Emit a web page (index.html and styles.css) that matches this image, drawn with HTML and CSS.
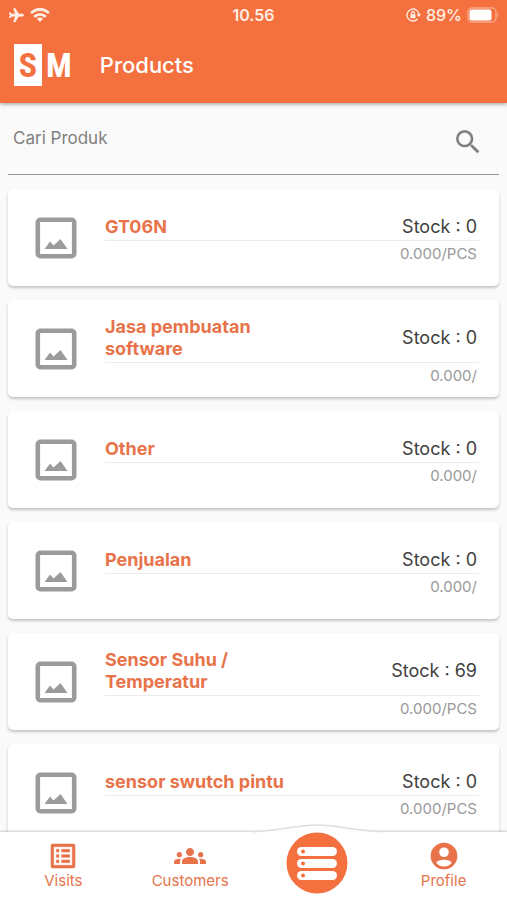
FILE: index.html
```html
<!DOCTYPE html>
<html lang="id">
<head>
    <meta charset="UTF-8">
    <meta name="viewport" content="width=device-width, initial-scale=1.0">
    <title>Products</title>
    <link rel="stylesheet" href="styles.css">
</head>
<body>
    <!-- Shared icons -->
    <svg class="sprite" aria-hidden="true">
        <symbol id="icon-image" viewBox="0 0 42 42">
            <rect x="2.8" y="2.8" width="36.400" height="36.400" rx="2.500" fill="none" stroke="currentColor" stroke-width="4.6"/>
            <path d="M9.500 32 L15 24.500 L18.500 28.500 L25.500 22 L32.500 32 Z" fill="currentColor"/>
        </symbol>
    </svg>

    <header class="app-header">
        <div class="status-bar">
            <div class="status-left">
                <svg width="17" height="17" viewBox="0 0 24 24" fill="currentColor" aria-hidden="true">
                    <path transform="rotate(90 12 12)" d="M21 16v-2l-8-5V3.500a1.500 1.500 0 0 0-3 0V9l-8 5v2l8-2.500V19l-2 1.500V22l3.500-1 3.500 1v-1.500L13 19v-5.500z" stroke="currentColor"/>
                </svg>
                <svg width="20" height="14" viewBox="0 0 20 14" fill="none" stroke="currentColor" stroke-width="2.8" aria-hidden="true">
                    <path d="M1 5 Q10 -2.500 19 5"/>
                    <path d="M4.200 8.800 Q10 4 15.800 8.800"/>
                    <path d="M10 14 L6.800 10.800 Q10 8.400 13.200 10.800 Z" fill="currentColor" stroke="none"/>
                </svg>
            </div>
            <span class="status-time">10.56</span>
            <div class="status-right">
                <svg width="15" height="14" viewBox="0 0 15 14" fill="none" stroke="currentColor" stroke-width="1.300" aria-hidden="true">
                    <path d="M11.500 11 A6 6 0 1 1 13 7"/>
                    <path d="M10.800 6.200 H15 L12.900 9 Z" fill="currentColor" stroke="none"/>
                    <rect x="4.500" y="6.200" width="5" height="4" rx="0.500" fill="currentColor" stroke="none"/>
                    <path d="M5.500 6.500 V5.200 a1.500 1.500 0 0 1 3 0 V6.500"/>
                </svg>
                <span class="status-battery">89%</span>
                <svg width="32" height="16" viewBox="0 0 32 16" aria-hidden="true">
                    <rect x="1" y="1" width="28" height="14" rx="4" fill="none" stroke="#fff" stroke-opacity="0.4" stroke-width="1.300"/>
                    <rect x="2.500" y="2.500" width="22" height="11" rx="2.500" fill="#fff"/>
                    <path d="M30.500 5.500 q2 2.500 0 5 z" fill="#fff" fill-opacity="0.4"/>
                </svg>
            </div>
        </div>
        <div class="title-bar">
            <div class="logo"><span class="logo-box">S</span><span class="logo-letter">M</span></div>
            <h1 class="page-title">Products</h1>
        </div>
    </header>

    <main class="content">
        <form class="search">
            <input class="search-input" type="text" placeholder="Cari Produk" aria-label="Cari Produk">
            <button class="search-button" type="button" aria-label="Cari">
                <svg width="32" height="32" viewBox="0 0 24 24" fill="currentColor" aria-hidden="true">
                    <path d="M15.500 14h-.79l-.28-.27A6.471 6.471 0 0 0 16 9.500 6.500 6.500 0 1 0 9.500 16c1.610 0 3.090-.59 4.230-1.570l.27.28v.79l5 4.990L20.490 19l-4.990-5zm-6 0C7.010 14 5 11.990 5 9.500S7.010 5 9.500 5 14 7.010 14 9.500 11.990 14 9.500 14z"/>
                </svg>
            </button>
        </form>

        <div class="product-list">
            <article class="product">
                <svg class="product-image" aria-hidden="true"><use href="#icon-image"/></svg>
                <div class="product-info">
                    <div class="product-row">
                        <h2 class="product-name">GT06N</h2>
                        <span class="product-stock">Stock : 0</span>
                    </div>
                    <p class="product-price">0.000/PCS</p>
                </div>
            </article>
            <article class="product">
                <svg class="product-image" aria-hidden="true"><use href="#icon-image"/></svg>
                <div class="product-info">
                    <div class="product-row">
                        <h2 class="product-name">Jasa pembuatan software</h2>
                        <span class="product-stock">Stock : 0</span>
                    </div>
                    <p class="product-price">0.000/</p>
                </div>
            </article>
            <article class="product">
                <svg class="product-image" aria-hidden="true"><use href="#icon-image"/></svg>
                <div class="product-info">
                    <div class="product-row">
                        <h2 class="product-name">Other</h2>
                        <span class="product-stock">Stock : 0</span>
                    </div>
                    <p class="product-price">0.000/</p>
                </div>
            </article>
            <article class="product">
                <svg class="product-image" aria-hidden="true"><use href="#icon-image"/></svg>
                <div class="product-info">
                    <div class="product-row">
                        <h2 class="product-name">Penjualan</h2>
                        <span class="product-stock">Stock : 0</span>
                    </div>
                    <p class="product-price">0.000/</p>
                </div>
            </article>
            <article class="product">
                <svg class="product-image" aria-hidden="true"><use href="#icon-image"/></svg>
                <div class="product-info">
                    <div class="product-row">
                        <h2 class="product-name">Sensor Suhu / Temperatur</h2>
                        <span class="product-stock">Stock : 69</span>
                    </div>
                    <p class="product-price">0.000/PCS</p>
                </div>
            </article>
            <article class="product">
                <svg class="product-image" aria-hidden="true"><use href="#icon-image"/></svg>
                <div class="product-info">
                    <div class="product-row">
                        <h2 class="product-name">sensor swutch pintu</h2>
                        <span class="product-stock">Stock : 0</span>
                    </div>
                    <p class="product-price">0.000/PCS</p>
                </div>
            </article>
        </div>
    </main>

    <nav class="bottom-nav">
        <a class="nav-item" href="#visits">
            <svg width="32" height="32" viewBox="0 0 24 24" fill="currentColor" aria-hidden="true">
                <path d="M19 5v14H5V5h14m1.100-2H3.900c-.5 0-.9.4-.9.900v16.200c0 .4.4.9.9.900h16.200c.4 0 .9-.5.9-.9V3.900c0-.5-.5-.9-.9-.9zM11 7h6v2h-6V7zm0 4h6v2h-6v-2zm0 4h6v2h-6zM7 7h2v2H7zm0 4h2v2H7zm0 4h2v2H7z" stroke="currentColor" stroke-width="0.4"/>
            </svg>
            <span>Visits</span>
        </a>
        <a class="nav-item" href="#customers">
            <svg width="32" height="32" viewBox="0 0 24 24" fill="currentColor" aria-hidden="true">
                <path d="M12 12.750c1.630 0 3.070.39 4.240.9 1.080.48 1.760 1.560 1.760 2.730V18H6v-1.610c0-1.180.68-2.260 1.760-2.730 1.170-.52 2.610-.91 4.240-.91zM4 13c1.100 0 2-.9 2-2s-.9-2-2-2-2 .9-2 2 .9 2 2 2zm1.130 1.100c-.37-.06-.74-.1-1.130-.1-.99 0-1.930.21-2.780.58A2.010 2.010 0 0 0 0 16.430V18h4.500v-1.610c0-.83.23-1.610.63-2.290zM20 13c1.100 0 2-.9 2-2s-.9-2-2-2-2 .9-2 2 .9 2 2 2zm4 3.430c0-.81-.48-1.530-1.220-1.850A6.950 6.950 0 0 0 20 14c-.39 0-.76.04-1.130.1.4.68.63 1.460.63 2.290V18H24v-1.570zM12 6c1.660 0 3 1.340 3 3s-1.340 3-3 3-3-1.340-3-3 1.340-3 3-3z"/>
            </svg>
            <span>Customers</span>
        </a>
        <a class="nav-item nav-active" href="#products" aria-label="Products">
            <svg class="nav-bump" width="140" height="10" viewBox="0 0 140 10" aria-hidden="true">
                <path d="M0 8 C30 7 50 1 70 1 C90 1 110 7 140 8 V10 H0 Z" fill="#fff"/>
                <path d="M6 7.700 C32 6.600 51 1 70 1 C89 1 108 6.600 134 7.700" fill="none" stroke="#dedede" stroke-width="1.500"/>
            </svg>
            <svg class="nav-circle" width="62" height="62" viewBox="0 0 62 62" aria-hidden="true">
                <circle cx="31" cy="31" r="30.500" fill="currentColor"/>
                <g fill="#fff">
                    <rect x="11" y="15" width="40" height="9" rx="4.500"/>
                    <rect x="11" y="27" width="40" height="9" rx="4.500"/>
                    <rect x="11" y="39" width="40" height="9" rx="4.500"/>
                </g>
                <g fill="currentColor">
                    <circle cx="17" cy="19.500" r="2"/>
                    <circle cx="17" cy="31.500" r="2"/>
                    <circle cx="17" cy="43.500" r="2"/>
                </g>
            </svg>
        </a>
        <a class="nav-item" href="#profile">
            <svg width="32" height="32" viewBox="0 0 24 24" fill="currentColor" aria-hidden="true">
                <path fill-rule="evenodd" d="M12 2a10 10 0 1 0 0 20 10 10 0 0 0 0-20zm0 3.600a3.600 3.600 0 1 1 0 7.200 3.600 3.600 0 0 1 0-7.200zm0 14.200c-2.500 0-4.500-1-5.800-2.800.5-1.400 3.500-2.200 5.800-2.200s5.300.8 5.800 2.200c-1.300 1.800-3.300 2.800-5.800 2.800z"/>
            </svg>
            <span>Profile</span>
        </a>
    </nav>
</body>
</html>
```
FILE: styles.css
```css
* {
    box-sizing: border-box;
}

body {
    margin: 0;
    height: 100vh;
    display: flex;
    flex-direction: column;
    overflow: hidden;
    font-family: Inter, "Liberation Sans", sans-serif;
    background-color: #fafafa;
    color: #404040;
}

.sprite {
    display: none;
}

/* Header */
.app-header {
    flex-shrink: 0;
    padding-bottom: 17px;
    background-color: #f4713f;
    color: #fff;
    box-shadow: 0 1px 4px rgba(0, 0, 0, 0.4);
}

.status-bar {
    display: grid;
    grid-template-columns: 1fr auto 1fr;
    align-items: center;
    height: 30px;
    padding: 0 8px;
    color: #ffeee6;
    font-size: 16px;
}

.status-left,
.status-right {
    display: flex;
    align-items: center;
    gap: 5px;
}

.status-right {
    justify-content: flex-end;
}

.status-time {
    font-weight: 600;
}

.status-battery {
    font-weight: 500;
}

.title-bar {
    display: flex;
    align-items: center;
    gap: 28px;
    padding: 14px 14px 0;
}

.logo {
    display: flex;
    align-items: center;
    gap: 4px;
    font-family: "Liberation Sans Narrow", "Roboto Condensed", "DejaVu Sans Condensed", sans-serif;
    font-size: 34px;
    font-weight: bold;
}

.logo-box {
    width: 28px;
    background-color: #fff;
    color: #f4713f;
    line-height: 42px;
    text-align: center;
}

.page-title {
    margin: 0;
    font-size: 22px;
    font-weight: 500;
}

/* Search */
.content {
    flex: 1;
    min-height: 0;
    overflow: hidden;
    padding: 0 8px;
}

.search {
    display: flex;
    align-items: center;
    height: 72px;
    border-bottom: 1px solid #999;
}

.search-input {
    flex: 1;
    min-width: 0;
    padding: 0 5px 2px;
    border: none;
    outline: none;
    background: none;
    color: #404040;
    font-family: inherit;
    font-size: 17px;
}

.search-input::placeholder {
    color: #808080;
    opacity: 1;
}

.search-button {
    display: flex;
    padding: 7px 15px 0;
    border: none;
    background: none;
    color: #808080;
    cursor: pointer;
}

/* Products */
.product-list {
    display: flex;
    flex-direction: column;
    gap: 14px;
    padding-top: 14px;
}

.product {
    display: flex;
    align-items: center;
    gap: 28px;
    min-height: 97px;
    padding: 0 20px 0 27px;
    border-radius: 5px;
    background-color: #fff;
    box-shadow: 0 2px 3px rgba(0, 0, 0, 0.22);
}

.product-image {
    flex-shrink: 0;
    width: 42px;
    height: 42px;
    color: #9b9b9b;
}

.product-info {
    flex: 1;
    min-width: 0;
    padding-top: 4px;
}

.product-row {
    display: flex;
    align-items: center;
    justify-content: space-between;
    padding-bottom: 2px;
    border-bottom: 1px solid #ececec;
}

.product-name {
    width: 55%;
    margin: 0;
    color: #e8734a;
    font-size: 18px;
    font-weight: 700;
    line-height: 22px;
}

.product-stock {
    padding-right: 2px;
    font-size: 18px;
    line-height: 22px;
}

.product-price {
    margin: 3px 2px 0 0;
    color: #999;
    font-size: 15px;
    line-height: 20px;
    text-align: right;
}

/* Bottom navigation */
.bottom-nav {
    position: relative;
    flex-shrink: 0;
    display: grid;
    grid-template-columns: repeat(4, 1fr);
    height: 68px;
    background-color: #fff;
    box-shadow: 0 -1px 2px rgba(0, 0, 0, 0.2);
}

.nav-item {
    position: relative;
    display: flex;
    flex-direction: column;
    align-items: center;
    padding-top: 8px;
    color: #e8734a;
    font-size: 15px;
    line-height: 18px;
    text-decoration: none;
}

.nav-active {
    padding-top: 0;
    color: #f4713f;
}

.nav-bump {
    position: absolute;
    top: -8px;
    left: 50%;
    margin-left: -70px;
}

.nav-circle {
    position: relative;
}
```
